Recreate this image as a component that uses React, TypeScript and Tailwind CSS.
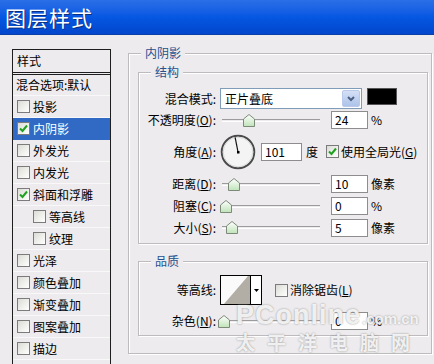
import React from "react";

const FONT = "font-['Noto_Sans_CJK_SC','Liberation_Sans',sans-serif]";

// Left side style list
const styleItems = [
  { label: "投影", checked: false },
  { label: "内阴影", checked: true, active: true },
  { label: "外发光", checked: false },
  { label: "内发光", checked: false },
  { label: "斜面和浮雕", checked: true },
  { label: "等高线", checked: false, indent: true },
  { label: "纹理", checked: false, indent: true },
  { label: "光泽", checked: false },
  { label: "颜色叠加", checked: false },
  { label: "渐变叠加", checked: false },
  { label: "图案叠加", checked: false },
  { label: "描边", checked: false },
];

function CheckBox({ checked }: { checked?: boolean }) {
  return (
    <span className="flex items-center justify-center w-[13px] h-[13px] shrink-0 border border-[#7b7b7b] bg-gradient-to-br from-[#dcdcd6] to-white">
      {checked && (
        <svg width="9" height="9" viewBox="0 0 9 9">
          <path d="M1 4.5 L3.5 7 L8 1.5" fill="none" stroke="#21a121" strokeWidth="2" />
        </svg>
      )}
    </span>
  );
}

function Thumb({ left }: { left: number }) {
  return (
    <svg
      width="12"
      height="13"
      viewBox="0 0 12 13"
      className="absolute top-[1px]"
      style={{ left: left - 6 }}
    >
      <defs>
        <linearGradient id="thumbg" x1="0" y1="0" x2="0" y2="1">
          <stop offset="0" stopColor="#ffffff" />
          <stop offset="1" stopColor="#bfe3b8" />
        </linearGradient>
      </defs>
      <path d="M6 0.5 L11.5 5 L11.5 12.5 L0.5 12.5 L0.5 5 Z" fill="url(#thumbg)" stroke="#7d8a7a" />
    </svg>
  );
}

function Slider({ pos }: { pos: number }) {
  return (
    <div className="relative flex items-center w-[104px] h-[15px] pl-[2px] pr-[4px]">
      <div className="w-full h-[3px] border-t border-[#9c9c9c] border-b border-b-white" />
      <Thumb left={pos} />
    </div>
  );
}

function NumBox({ value, w = "w-[37px]" }: { value: string; w?: string }) {
  return (
    <div className={`${w} h-[18px] border border-[#8d8d8d] bg-white pl-[3px] text-[12px] leading-[16px] text-black`}>
      {value}
    </div>
  );
}

function Label({ children }: { children: React.ReactNode }) {
  return <div className="w-[81px] shrink-0 pr-[4px] text-right whitespace-nowrap">{children}</div>;
}

function Group({
  title,
  className,
  children,
}: {
  title: string;
  className: string;
  children: React.ReactNode;
}) {
  return (
    <div
      className={`relative border border-[#bdbbbd] shadow-[inset_1px_1px_0_#ffffff,1px_1px_0_#ffffff] ${className}`}
    >
      <span className="absolute -top-[10px] left-[12px] px-[4px] bg-[#edebed] text-[#24518f] text-[12px] leading-[18px]">
        {title}
      </span>
      {children}
    </div>
  );
}

function SliderRow({
  label,
  pos,
  value,
  unit,
  h,
}: {
  label: React.ReactNode;
  pos: number;
  value: string;
  unit: string;
  h: string;
}) {
  return (
    <div className={`flex items-center ${h}`}>
      <Label>{label}</Label>
      <Slider pos={pos} />
      <div className="ml-[7px]">
        <NumBox value={value} />
      </div>
      <span className="ml-[3px]">{unit}</span>
    </div>
  );
}

export default function App() {
  const a = (101 * Math.PI) / 180;
  const dx = Math.cos(a) * 15;
  const dy = -Math.sin(a) * 15;

  return (
    <div className={`relative w-[434px] h-[364px] overflow-hidden bg-[#edebed] text-[12px] text-black ${FONT}`}>
      {/* Title bar */}
      <div className="h-[35px] flex items-center pl-[5px] border-b border-[#0a3fa8] bg-gradient-to-b from-[#2a6fe6] via-[#0657e2] to-[#0246cc]">
        <span className="text-white text-[21px] leading-none tracking-[1px] [text-shadow:1px_1px_0_#0a2f80]">
          图层样式
        </span>
      </div>

      <div className="flex pl-[12px] pt-[14px]">
        {/* Styles list */}
        <div className="w-[99px] h-[330px] shrink-0 border border-b-0 border-[#1e1e1e]">
          <div className="h-[25px] flex items-center pl-[4px] border-b-[3px] border-double border-[#1e1e1e]">样式</div>
          <div className="h-[21px] flex items-center pl-[3px] border-b border-[#f8f8f8] whitespace-nowrap">
            混合选项:默认
          </div>
          {styleItems.map((it) => (
            <div
              key={it.label}
              className={`h-[22px] flex items-center gap-[3px] border-b ${
                it.active ? "bg-[#316ac5] text-white border-[#316ac5]" : "border-[#f8f8f8]"
              } ${it.indent ? "pl-[20px]" : "pl-[4px]"}`}
            >
              <CheckBox checked={it.checked} />
              <span>{it.label}</span>
            </div>
          ))}
        </div>

        {/* Right panel */}
        <div className="ml-[17px] mt-[4px]">
          <Group title="内阴影" className="w-[304px] pt-[18px] pl-[9px] pr-[3px] pb-[17px]">
            <Group title="结构" className="w-[290px] pt-[15px] pb-[5px]">
              {/* Blend mode */}
              <div className="flex items-center h-[21px]">
                <Label>混合模式:</Label>
                <div className="flex w-[142px] h-[21px] border border-[#7f9db9] bg-white">
                  <span className="flex-1 pl-[4px] leading-[19px]">正片叠底</span>
                  <span className="flex items-center justify-center w-[18px] m-[1px] rounded-[2px] bg-gradient-to-b from-[#d5e0f5] to-[#adc3ea] border border-[#b9c9ea]">
                    <svg width="8" height="6" viewBox="0 0 8 6">
                      <path d="M1 1 L4 4 L7 1" fill="none" stroke="#4d6185" strokeWidth="2" />
                    </svg>
                  </span>
                </div>
                <div className="ml-[5px] w-[30px] h-[17px] -mt-[4px] bg-black border border-[#555]" />
              </div>

              <SliderRow
                label={<>不透明度(<u>O</u>):</>}
                pos={29}
                value="24"
                unit="%"
                h="h-[22px]"
              />

              {/* Angle */}
              <div className="flex items-center h-[35px] mt-[3px]">
                <Label>角度(<u>A</u>):</Label>
                <svg width="36" height="36" viewBox="0 0 36 36" className="shrink-0">
                  <circle cx="18" cy="18" r="16.3" fill="#f4f4f4" stroke="#4a4a4a" strokeWidth="1.9" />
                  <circle cx="18" cy="18" r="14.8" fill="none" stroke="#d8d8d8" strokeWidth="1" />
                  <line x1="18" y1="18" x2={18 + dx} y2={18 + dy} stroke="#111" strokeWidth="1.2" />
                  <rect x="17" y="17" width="2.5" height="2.5" fill="#000" />
                </svg>
                <div className="ml-[5px]">
                  <NumBox value="101" w="w-[41px]" />
                </div>
                <span className="ml-[4px]">度</span>
                <div className="flex items-center gap-[2px] ml-[8px]">
                  <CheckBox checked />
                  <span className="whitespace-nowrap">使用全局光(<u>G</u>)</span>
                </div>
              </div>

              <div className="mt-[4px]">
                <SliderRow label={<>距离(<u>D</u>):</>} pos={14} value="10" unit="像素" h="h-[22px]" />
                <SliderRow label={<>阻塞(<u>C</u>):</>} pos={6} value="0" unit="%" h="h-[22px]" />
                <SliderRow label={<>大小(<u>S</u>):</>} pos={12} value="5" unit="像素" h="h-[21px]" />
              </div>
            </Group>

            <Group title="品质" className="w-[290px] mt-[17px] pt-[13px] pb-[4px]">
              <div className="flex items-center h-[30px]">
                <Label>等高线:</Label>
                <div className="flex w-[42px] h-[30px] border border-black bg-white">
                  <svg width="29" height="28" viewBox="0 0 29 28" className="shrink-0">
                    <rect width="29" height="28" fill="#fafafa" />
                    <path d="M3 28 L27 0 L29 0 L29 28 Z" fill="#b2aea6" />
                  </svg>
                  <span className="flex-1 flex items-center justify-center border-l border-black">
                    <svg width="5" height="3" viewBox="0 0 5 3">
                      <path d="M0 0 L5 0 L2.5 3 Z" fill="#000" />
                    </svg>
                  </span>
                </div>
                <div className="flex items-center gap-[2px] ml-[13px]">
                  <CheckBox />
                  <span className="whitespace-nowrap">消除锯齿(<u>L</u>)</span>
                </div>
              </div>
              <div className="mt-[6px]">
                <SliderRow label={<>杂色(<u>N</u>):</>} pos={4} value="0" unit="%" h="h-[20px]" />
              </div>
            </Group>
          </Group>
        </div>
      </div>

      {/* Watermark */}
      <div className="absolute left-[236px] top-[300px] text-white/85 [text-shadow:0_0_2px_#8a8a8a] pointer-events-none font-['Liberation_Sans',sans-serif]">
        <div className="flex items-baseline">
          <span className="text-[27px] font-bold leading-[30px] tracking-[1px]">PConline</span>
          <span className="text-[15px] font-bold ml-[1px]">.com.cn</span>
        </div>
        <div className={`text-[19px] leading-[22px] tracking-[12px] font-bold ${FONT}`}>太平洋电脑网</div>
      </div>
    </div>
  );
}
